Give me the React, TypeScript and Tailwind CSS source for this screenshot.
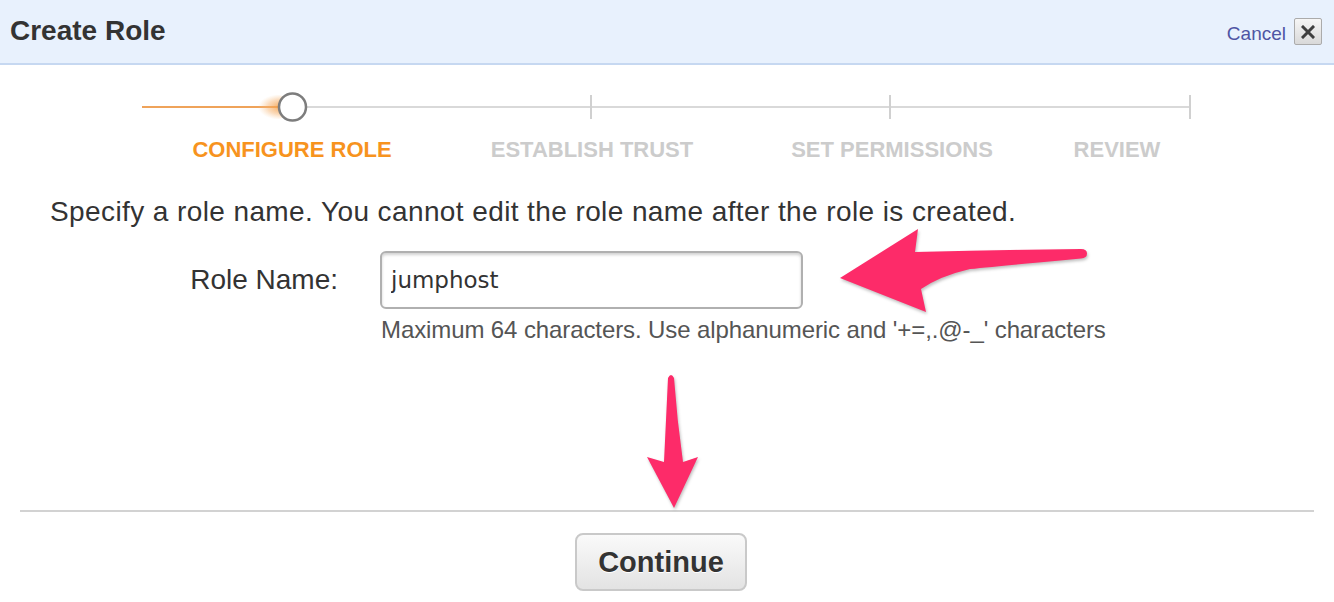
import React from 'react';

const PINK = '#fd2b69';

function StepTrack() {
  return (
    <svg width="1052" height="30" viewBox="0 0 1052 30" className="block">
      <defs>
        <radialGradient id="glow" cx="0.75" cy="0.5" r="0.5">
          <stop offset="0%" stopColor="#f39a3d" stopOpacity="0.9" />
          <stop offset="60%" stopColor="#f6b06a" stopOpacity="0.45" />
          <stop offset="100%" stopColor="#f8c58f" stopOpacity="0" />
        </radialGradient>
      </defs>
      <line x1="150" y1="15" x2="1048" y2="15" stroke="#d9d9d9" strokeWidth="2" />
      <line x1="0" y1="15" x2="140" y2="15" stroke="#efa35a" strokeWidth="2" />
      <ellipse cx="128" cy="15" rx="24" ry="13" fill="url(#glow)" />
      {[449, 748, 1048].map((x) => (
        <line key={x} x1={x} y1="3" x2={x} y2="27" stroke="#d0d0d0" strokeWidth="2" />
      ))}
      <circle cx="150.5" cy="15" r="13.5" fill="#fff" stroke="#7d7d7d" strokeWidth="2.5" />
    </svg>
  );
}

function Arrows() {
  return (
    <svg
      width="1334"
      height="602"
      viewBox="0 0 1334 602"
      className="absolute left-0 top-0 pointer-events-none"
      style={{ filter: 'drop-shadow(1px 2px 1.5px rgba(0,0,0,0.25))' }}
    >
      <path
        d="M 840 278 L 918 229 L 915 252 Q 1000 250 1081 249 Q 1087 249 1087 253.5 Q 1087 258 1081 258.5 Q 1000 266 970 269 Q 940 276 921 289 L 926 312 Z"
        fill={PINK}
      />
      <path
        d="M 668 378 Q 671 372 674 378 Q 677 420 683 462 L 698 457 L 674 508 L 647 457 L 664 462 Q 666 420 668 378 Z"
        fill={PINK}
      />
    </svg>
  );
}

export default function App() {
  return (
    <div className="relative w-[1334px] h-[602px] overflow-hidden bg-white font-['Liberation_Sans',Arial,sans-serif] text-[#333]">
      {/* header */}
      <div className="flex items-center justify-between h-[65px] pl-[10px] pr-[12px] bg-[#e8f1fd] border-b-2 border-[#c6d8f1]">
        <h1 className="text-[28px] font-bold leading-none pb-[2px] text-[#333]">Create Role</h1>
        <div className="flex items-center gap-[8px]">
          <span className="text-[19px] leading-none text-[#4e55a4] pt-[4px]">Cancel</span>
          <div className="w-[28px] h-[27px] flex items-center justify-center rounded-[2px] border border-[#ababab] bg-gradient-to-b from-[#f6f6f6] to-[#d9d9d9]">
            <svg width="14" height="14" viewBox="0 0 14 14">
              <path d="M2 2 L12 12 M12 2 L2 12" stroke="#3f3f3f" strokeWidth="3" strokeLinecap="square" />
            </svg>
          </div>
        </div>
      </div>

      {/* stepper */}
      <div className="ml-[142px] mt-[27px]">
        <StepTrack />
      </div>
      <div className="ml-[142px] mt-[17px] grid grid-cols-[300px_300px_300px_150px] text-[22px] leading-[22px] font-bold text-center">
        <span className="text-[#f7931e]">CONFIGURE ROLE</span>
        <span className="text-[#cccccc]">ESTABLISH TRUST</span>
        <span className="text-[#cccccc]">SET PERMISSIONS</span>
        <span className="text-[#cccccc]">REVIEW</span>
      </div>

      {/* form */}
      <p className="ml-[50px] mt-[37px] text-[28px] leading-[28px] tracking-[0.4px]">
        Specify a role name. You cannot edit the role name after the role is created.
      </p>
      <div className="flex items-center mt-[25px]">
        <label className="w-[338px] text-right text-[28px] leading-[28px]">Role Name:</label>
        <input
          readOnly
          defaultValue="jumphost"
          className="ml-[42px] w-[423px] h-[58px] pl-[9px] rounded-[6px] border-2 border-[#b0b0b0] bg-white shadow-[inset_0_2px_3px_rgba(0,0,0,0.18)] text-[23px] text-[#333] font-['DejaVu_Sans',sans-serif] outline-none"
        />
      </div>
      <p className="ml-[381px] mt-[9px] text-[24px] leading-[24px] text-[#555] tracking-[-0.1px]">
        Maximum 64 characters. Use alphanumeric and '+=,.@-_' characters
      </p>

      {/* footer */}
      <div className="mx-[20px] mt-[168px] h-[2px] bg-[#d2d2d2]" />
      <div className="flex justify-center pr-[12px] mt-[21px]">
        <button className="w-[172px] h-[58px] rounded-[8px] border-2 border-[#c9c9c9] bg-gradient-to-b from-[#fafafa] to-[#e3e3e3] text-[29px] font-bold text-[#333] pt-[2px] [text-shadow:0_1px_0_#fff]">
          Continue
        </button>
      </div>

      <Arrows />
    </div>
  );
}
